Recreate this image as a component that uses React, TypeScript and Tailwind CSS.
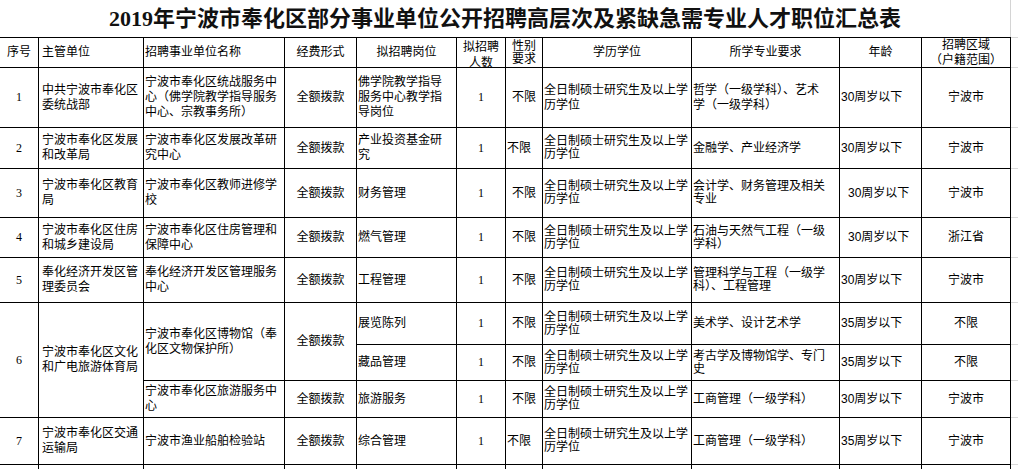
import React from 'react';

type Opt = {
  a?: 'c' | 'l' | 'l3' | 'i';
  span?: 2 | 3;
  lh?: 'n' | 't' | 'w';
  serif?: boolean;
  top?: boolean;
  open?: boolean;
  low?: boolean;
};

type Def = [string, Opt?];

const EDU = '全日制硕士研究生及以上学\n历学位';

// each row lists columns 1-11, rows 6a/6b/6c skip the spanned cells
const ROWS: Def[][] = [
  [
    ['1', { a: 'c', serif: true }],
    ['中共宁波市奉化区\n委统战部', { a: 'l3' }],
    ['宁波市奉化区统战服务中\n心（佛学院教学指导服务\n中心、宗教事务所）'],
    ['全额拨款', { a: 'c' }],
    ['佛学院教学指导\n服务中心教学指\n导岗位'],
    ['1', { a: 'c', serif: true }],
    ['不限', { a: 'c' }],
    [EDU],
    ['哲学（一级学科）、艺术\n学（一级学科）'],
    ['30周岁以下'],
    ['宁波市', { a: 'c' }],
  ],
  [
    ['2', { a: 'c', serif: true }],
    ['宁波市奉化区发展\n和改革局', { a: 'l3' }],
    ['宁波市奉化区发展改革研\n究中心'],
    ['全额拨款', { a: 'c' }],
    ['产业投资基金研\n究'],
    ['1', { a: 'c', serif: true }],
    ['不限'],
    [EDU, { lh: 't' }],
    ['金融学、产业经济学'],
    ['30周岁以下'],
    ['宁波市', { a: 'c' }],
  ],
  [
    ['3', { a: 'c', serif: true }],
    ['宁波市奉化区教育\n局', { a: 'l3' }],
    ['宁波市奉化区教师进修学\n校'],
    ['全额拨款', { a: 'c' }],
    ['财务管理'],
    ['1', { a: 'c', serif: true }],
    ['不限', { a: 'c' }],
    [EDU, { lh: 't' }],
    ['会计学、财务管理及相关\n专业', { lh: 't' }],
    ['30周岁以下', { a: 'i' }],
    ['宁波市', { a: 'c' }],
  ],
  [
    ['4', { a: 'c', serif: true }],
    ['宁波市奉化区住房\n和城乡建设局', { a: 'l3' }],
    ['宁波市奉化区住房管理和\n保障中心'],
    ['全额拨款', { a: 'c' }],
    ['燃气管理'],
    ['1', { a: 'c', serif: true }],
    ['不限', { a: 'c' }],
    [EDU, { lh: 't' }],
    ['石油与天然气工程（一级\n学科）', { lh: 't' }],
    ['30周岁以下', { a: 'i' }],
    ['浙江省', { a: 'c' }],
  ],
  [
    ['5', { a: 'c', serif: true }],
    ['奉化经济开发区管\n理委员会', { a: 'l3' }],
    ['奉化经济开发区管理服务\n中心'],
    ['全额拨款', { a: 'c' }],
    ['工程管理'],
    ['1', { a: 'c', serif: true }],
    ['不限', { a: 'c' }],
    [EDU, { lh: 't' }],
    ['管理科学与工程（一级学\n科）、工程管理', { lh: 't' }],
    ['30周岁以下'],
    ['宁波市', { a: 'c' }],
  ],
  [
    ['6', { a: 'c', serif: true, span: 3 }],
    ['宁波市奉化区文化\n和广电旅游体育局', { a: 'l3', span: 3 }],
    ['宁波市奉化区博物馆（奉\n化区文物保护所）', { span: 2 }],
    ['全额拨款', { a: 'c', span: 2 }],
    ['展览陈列'],
    ['1', { a: 'c', serif: true }],
    ['不限', { a: 'c' }],
    [EDU, { lh: 't' }],
    ['美术学、设计艺术学'],
    ['35周岁以下'],
    ['不限', { a: 'c' }],
  ],
  [
    ['藏品管理'],
    ['1', { a: 'c', serif: true }],
    ['不限', { a: 'c' }],
    [EDU, { lh: 't' }],
    ['考古学及博物馆学、专门\n史', { lh: 't' }],
    ['35周岁以下'],
    ['不限', { a: 'c' }],
  ],
  [
    ['宁波市奉化区旅游服务中\n心'],
    ['全额拨款', { a: 'c' }],
    ['旅游服务'],
    ['1', { a: 'c', serif: true }],
    ['不限', { a: 'c' }],
    [EDU, { lh: 't' }],
    ['工商管理（一级学科）'],
    ['30周岁以下'],
    ['宁波市', { a: 'c' }],
  ],
  [
    ['7', { a: 'c', serif: true }],
    ['宁波市奉化区交通\n运输局', { a: 'l3' }],
    ['宁波市渔业船舶检验站'],
    ['全额拨款', { a: 'c' }],
    ['综合管理'],
    ['1', { a: 'c', serif: true }],
    ['不限'],
    [EDU, { lh: 't' }],
    ['工商管理（一级学科）'],
    ['35周岁以下'],
    ['宁波市', { a: 'c' }],
  ],
];

const HEAD: Def[] = [
  ['序号', { a: 'c', top: true }],
  ['主管单位', { a: 'l3', top: true }],
  ['招聘事业单位名称', { top: true }],
  ['经费形式', { a: 'c', top: true }],
  ['拟招聘岗位', { a: 'c', top: true }],
  ['拟招聘\n人数', { a: 'c', top: true, lh: 'w', low: true }],
  ['性别\n要求', { a: 'c', top: true, lh: 't' }],
  ['学历学位', { a: 'c', top: true }],
  ['所学专业要求', { a: 'c', top: true }],
  ['年龄', { a: 'c', top: true }],
  ['招聘区域\n（户籍范围）', { a: 'c', top: true, lh: 'n' }],
];

function Cell({ text, opt = {} }: { text: string; opt?: Opt }) {
  const align =
    opt.a === 'c'
      ? 'justify-center text-center'
      : opt.a === 'l3'
        ? 'pl-[3px]'
        : opt.a === 'i'
          ? 'pl-[8px]'
          : 'pl-[1px]';
  const span = opt.span === 3 ? 'row-span-3' : opt.span === 2 ? 'row-span-2' : '';
  const lh = opt.lh === 't' ? 'leading-[13px]' : opt.lh === 'w' ? 'leading-[16px]' : 'leading-[15px]';
  const font = opt.serif
    ? "font-[family-name:'Liberation_Serif',serif]"
    : "font-[family-name:'Liberation_Sans','Noto_Sans_CJK_SC',sans-serif]";
  const border = opt.open ? 'border-r border-black' : 'border-r border-b border-black';
  return (
    <div
      className={`flex items-center overflow-hidden whitespace-pre text-[12px] text-black ${border} ${opt.top ? 'border-t' : ''} ${opt.low ? 'pt-[5px]' : ''} ${align} ${span} ${lh} ${font}`}
    >
      <span>{text}</span>
    </div>
  );
}

function Edge({ top = false }: { top?: boolean }) {
  return <div className={`border-b border-[#d9d9d9] ${top ? 'border-t border-t-[#d9d9d9]' : ''}`} />;
}

export default function App() {
  return (
    <div className="w-[1018px] h-[469px] overflow-hidden bg-white">
      <div className="w-[1011px] h-[37px] border-r border-[#d4d4d4] flex items-center justify-center pt-[1px]">
        <h1 className="text-[22px] leading-none font-bold text-[#111] font-[family-name:'Liberation_Serif','Noto_Sans_CJK_SC',serif]">
          2019年宁波市奉化区部分事业单位公开招聘高层次及紧缺急需专业人才职位汇总表
        </h1>
      </div>
      <div className="grid grid-cols-[39px_105px_141px_72px_100px_49px_37px_149px_148px_82px_89px_7px] grid-rows-[31px_60px_41px_49px_40px_45px_42px_36px_37px_47px_40px]">
        {HEAD.map(([t, o], i) => (
          <Cell key={`h${i}`} text={t} opt={o} />
        ))}
        <Edge top />
        {ROWS.map((row, r) => (
          <React.Fragment key={r}>
            {row.map(([t, o], c) => (
              <Cell key={`${r}-${c}`} text={t} opt={o} />
            ))}
            <Edge />
          </React.Fragment>
        ))}
        {Array.from({ length: 11 }).map((_, i) => (
          <Cell key={`e${i}`} text="" opt={{ open: true }} />
        ))}
        <div />
      </div>
    </div>
  );
}
